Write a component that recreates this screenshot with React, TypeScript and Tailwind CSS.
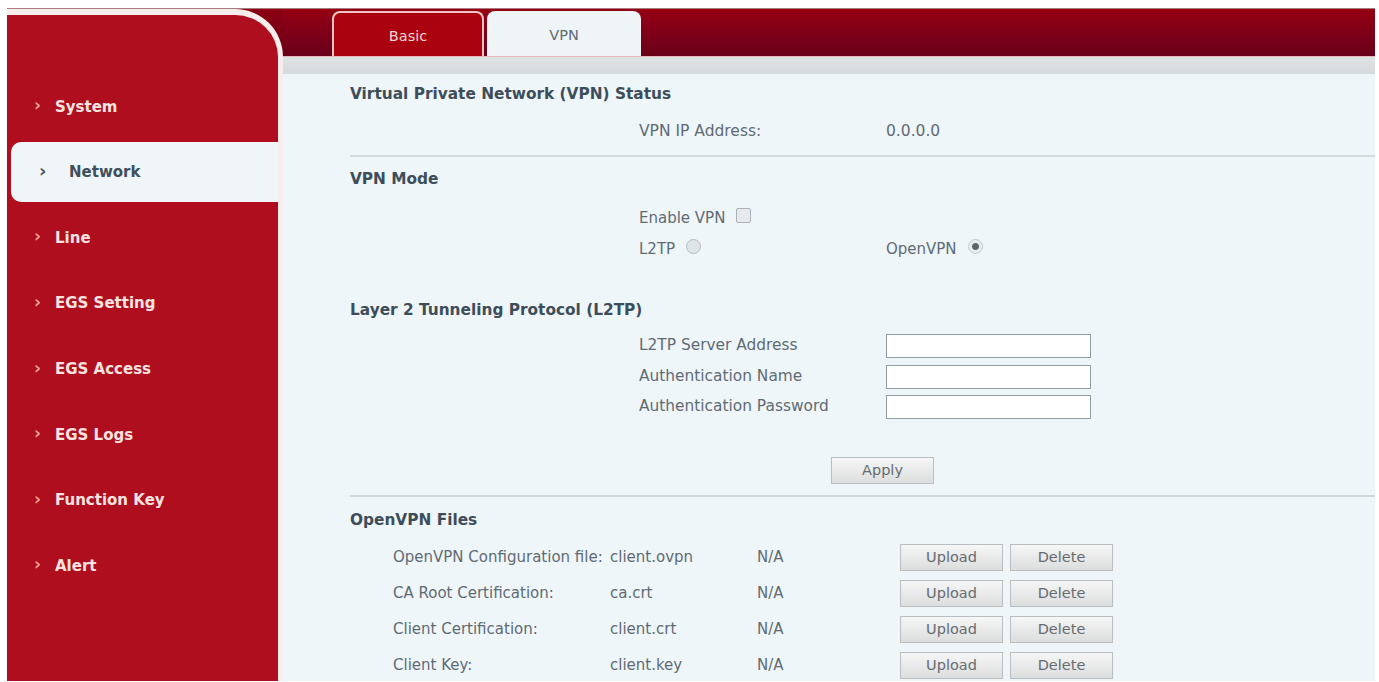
const NAV = ["System", "Network", "Line", "EGS Setting", "EGS Access", "EGS Logs", "Function Key", "Alert"];
const FILES = [
  ["OpenVPN Configuration file:", "client.ovpn"],
  ["CA Root Certification:", "ca.crt"],
  ["Client Certification:", "client.crt"],
  ["Client Key:", "client.key"],
];
const CREDENTIALS = ["L2TP Server Address", "Authentication Name", "Authentication Password"];

function NavItem({ label }: { label: string }) {
  if (label === "Network") {
    return (
      <div className="h-[65.6px] flex items-center pl-1">
        <div className="h-[60px] w-full flex items-center pl-[28px] rounded-l-[10px] bg-[#eff5f9] text-[#3f4f5b] font-bold text-[15px]">
          <span className="w-[30px] text-[18px] leading-none -mt-0.5">›</span>
          <span>{label}</span>
        </div>
      </div>
    );
  }
  return (
    <div className="h-[65.6px] flex items-center pl-[27px] text-[#fbe3e0] font-bold text-[15px]">
      <span className="w-[21px] text-[17px] leading-none -mt-0.5 text-[#f4a59a]">›</span>
      <span>{label}</span>
    </div>
  );
}

function Heading({ children, className }: { children: string; className: string }) {
  return <h2 className={`font-bold text-[15.35px] text-[#3d4d59] leading-5 ${className}`}>{children}</h2>;
}

function Btn({ label, className }: { label: string; className: string }) {
  return (
    <button className={`h-[27px] border border-[#b9bdbf] bg-gradient-to-b from-[#f6f6f6] to-[#dcdddd] text-[#666b70] text-[14.5px] pb-px ${className}`}>
      {label}
    </button>
  );
}

export default function App() {
  return (
    <div className="h-[682px] w-[1379px] overflow-hidden bg-white pt-2 pl-[7px] pr-1 pb-px font-['DejaVu_Sans',sans-serif]">
      <div className="h-full flex border-t border-[#a8797e]">
        <aside className="w-[276px] h-full shrink-0 bg-[linear-gradient(to_bottom,#8c0012_0,#6e0017_48px,#eff6fa_48px)]">
          <div className="h-full rounded-tr-[48px] bg-[#ae0e1e] border-t-[6px] border-r-[5px] border-[#f8eded] pt-[59px]">
            {NAV.map((n) => (
              <NavItem key={n} label={n} />
            ))}
          </div>
        </aside>
        <main className="flex-1 min-w-0 flex flex-col bg-[#eff6fa]">
          <div className="h-[48px] shrink-0 flex items-end pl-[49px] bg-gradient-to-b from-[#960012] to-[#690019] border-b border-[#e7b9bd]">
            <div className="w-[152px] h-[45px] flex items-center justify-center rounded-t-[8px] border-2 border-b-0 border-[#f3c5c5] bg-[#ab0210] text-[#f6d6d2] text-[14.5px] pt-1">
              Basic
            </div>
            <div className="w-[154px] h-[45px] ml-[3px] flex items-center justify-center rounded-t-[8px] bg-[#eff4f7] text-[#5d6b75] text-[14.5px] pt-1">
              VPN
            </div>
          </div>
          <div className="h-[17px] shrink-0 bg-gradient-to-b from-[#dfe2e3] to-[#d5dadc]" />
          <div className="pl-[67px] text-[15px] text-[#5f6b73] leading-5">
            <Heading className="pt-[10px]">Virtual Private Network (VPN) Status</Heading>
            <div className="grid grid-cols-[247px_1fr] pl-[289px] mt-[17px] text-[15.5px]">
              <span>VPN IP Address:</span>
              <span>0.0.0.0</span>
            </div>
            <hr className="mt-[14px] border-t-2 border-[#d6dbde]" />
            <Heading className="mt-[12px]">VPN Mode</Heading>
            <div className="pl-[289px] mt-[19px] flex items-center gap-[11px] h-5">
              <span>Enable VPN</span>
              <input type="checkbox" className="appearance-none w-[15px] h-[15px] -mt-1.5 rounded-[2px] border border-[#a9b2b8] bg-[#e6eaec]" />
            </div>
            <div className="grid grid-cols-[247px_1fr] pl-[289px] mt-[11px]">
              <div className="flex items-center gap-[11px]">
                <span>L2TP</span>
                <input type="radio" name="mode" className="appearance-none w-[15px] h-[15px] -mt-1.5 rounded-full border border-[#b4bcc1] bg-[#dfe4e7]" />
              </div>
              <div className="flex items-center gap-[11px]">
                <span>OpenVPN</span>
                <input type="radio" name="mode" defaultChecked className="appearance-none w-[15px] h-[15px] -mt-1.5 rounded-full border border-[#c3cacf] bg-[radial-gradient(circle,#5d6569_0,#5d6569_3px,#e8ecee_4px)]" />
              </div>
            </div>
            <Heading className="mt-[41px]">Layer 2 Tunneling Protocol (L2TP)</Heading>
            <div className="mt-[14px] flex flex-col gap-[6.5px] text-[15.4px]">
              {CREDENTIALS.map((c) => (
                <div key={c} className="grid grid-cols-[247px_205px] pl-[289px] items-center h-6">
                  <span className="-mt-0.5">{c}</span>
                  <input className="h-6 w-[205px] border border-[#8f9ca5] bg-white" />
                </div>
              ))}
            </div>
            <div className="mt-[38px] pl-[481px]">
              <Btn label="Apply" className="w-[103px]" />
            </div>
            <hr className="mt-[11px] border-t-2 border-[#cfd5d8]" />
            <Heading className="mt-[13px]">OpenVPN Files</Heading>
            <div className="mt-[14px] flex flex-col gap-[9px]">
              {FILES.map(([label, file]) => (
                <div key={file} className="h-[27px] flex items-center pl-[43px]">
                  <span className="w-[217px] shrink-0 whitespace-nowrap pb-0.5">{label}</span>
                  <span className="w-[147px] shrink-0 pb-0.5">{file}</span>
                  <span className="w-[143px] shrink-0 pb-0.5">N/A</span>
                  <Btn label="Upload" className="w-[103px]" />
                  <Btn label="Delete" className="w-[103px] ml-[7px]" />
                </div>
              ))}
            </div>
          </div>
        </main>
      </div>
    </div>
  );
}
